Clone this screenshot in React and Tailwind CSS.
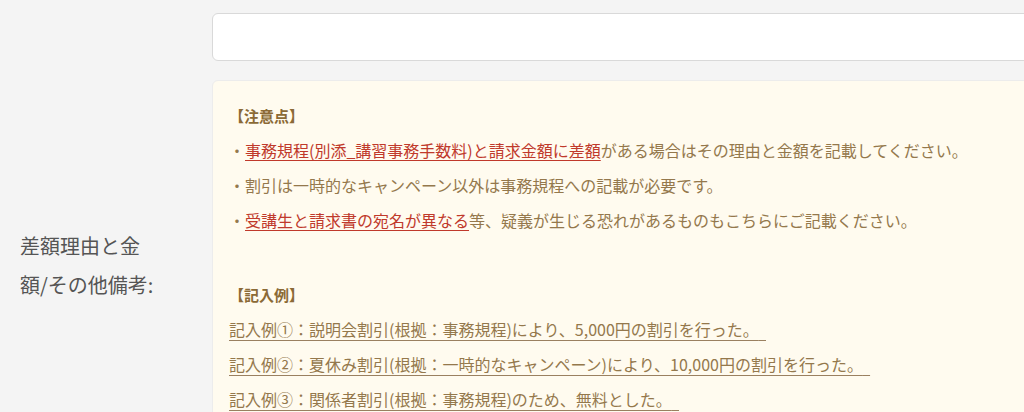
import React from 'react';

const jp = { fontFamily: '"Noto Sans CJK JP", "Noto Sans", sans-serif' };

function Red({ children }) {
  return <span className="text-[#c0392b] underline underline-offset-[3px] decoration-[#c0392b]">{children}</span>;
}

function Example({ children }) {
  return (
    <div className="leading-[35px]">
      <span className="underline underline-offset-[4px] decoration-[#9a8060]">{children}{'\u00a0\u00a0'}</span>
    </div>
  );
}

export default function App() {
  return (
    <div className="w-full min-h-[412px] bg-[#f4f4f4] overflow-hidden" style={jp}>
      <div className="flex items-start">
        <div className="w-[212px] shrink-0 pl-[20px] pt-[226px]">
          <div className="w-[138px] text-[20px] leading-[39px] text-[#555555]">
            差額理由と金額/その他備考:
          </div>
        </div>

        <div className="w-[880px] shrink-0 pt-[13px]">
          <div className="h-[48px] bg-white border border-[#d9d9d9] rounded-[6px]" />

          <div className="mt-[19px] bg-[#fffbef] border border-[#ececec] rounded-[6px] pl-[16px] pt-[17px] pb-[32px] text-[16px] text-[#94784c]">
            <div className="leading-[35px] text-[15px] font-bold text-[#8b6a36]">【注意点】</div>
            <div className="leading-[35px]">
              ・<Red>事務規程(別添_講習事務手数料)と請求金額に差額</Red>がある場合はその理由と金額を記載してください。
            </div>
            <div className="leading-[35px]">・割引は一時的なキャンペーン以外は事務規程への記載が必要です。</div>
            <div className="leading-[35px]">
              ・<Red>受講生と請求書の宛名が異なる</Red>等、疑義が生じる恐れがあるものもこちらにご記載ください。
            </div>

            <div className="h-[39px]" />

            <div className="leading-[35px] text-[15px] font-bold text-[#8b6a36]">【記入例】</div>
            <Example>記入例①：説明会割引(根拠：事務規程)により、5,000円の割引を行った。</Example>
            <Example>記入例②：夏休み割引(根拠：一時的なキャンペーン)により、10,000円の割引を行った。</Example>
            <Example>記入例③：関係者割引(根拠：事務規程)のため、無料とした。</Example>
          </div>
        </div>
      </div>
    </div>
  );
}
